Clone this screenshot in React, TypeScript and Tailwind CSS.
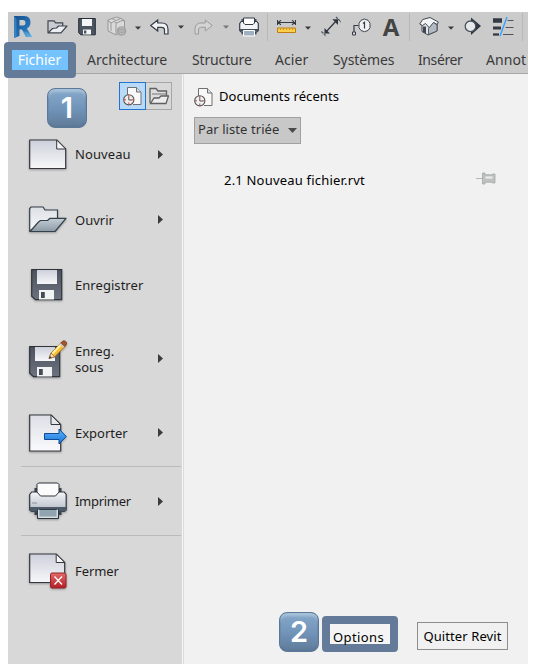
import type { ReactNode } from 'react';

type IconProps = { box: string; w: number; h: number; className?: string; children: ReactNode };

function Icon({ box, w, h, className = '', children }: IconProps) {
  return (
    <svg viewBox={box} width={w} height={h} fill="none" className={`block shrink-0 ${className}`}>
      {children}
    </svg>
  );
}

function Gradients() {
  return (
    <svg width="0" height="0" className="absolute">
      <defs>
        <linearGradient id="paper" x1="0" y1="0" x2="0" y2="1">
          <stop offset="0" stopColor="#cdd0db" />
          <stop offset="1" stopColor="#f7f7f9" />
        </linearGradient>
        <linearGradient id="sheet" x1="0" y1="0" x2="0" y2="1">
          <stop offset="0" stopColor="#dcdfe6" />
          <stop offset="1" stopColor="#fafafb" />
        </linearGradient>
        <linearGradient id="steel" x1="0" y1="0" x2="0" y2="1">
          <stop offset="0" stopColor="#c5ced6" />
          <stop offset="1" stopColor="#8c9aa6" />
        </linearGradient>
        <linearGradient id="disk" x1="0" y1="0" x2="0" y2="1">
          <stop offset="0" stopColor="#4c535e" />
          <stop offset="1" stopColor="#6c737e" />
        </linearGradient>
        <linearGradient id="blue" x1="0" y1="0" x2="0" y2="1">
          <stop offset="0" stopColor="#5bb4fa" />
          <stop offset="1" stopColor="#1973dc" />
        </linearGradient>
        <linearGradient id="red" x1="0" y1="0" x2="0" y2="1">
          <stop offset="0" stopColor="#e36b6b" />
          <stop offset="1" stopColor="#b51d25" />
        </linearGradient>
        <linearGradient id="body" x1="0" y1="0" x2="0" y2="1">
          <stop offset="0" stopColor="#f4f5f7" />
          <stop offset="1" stopColor="#b4bac5" />
        </linearGradient>
        <linearGradient id="logo" x1="0" y1="0" x2="1" y2="1">
          <stop offset="0" stopColor="#174f8c" />
          <stop offset="0.6" stopColor="#2270b5" />
          <stop offset="1" stopColor="#58b2e8" />
        </linearGradient>
      </defs>
    </svg>
  );
}

function Caret({ className, color = '#3c3c3c' }: { className: string; color?: string }) {
  return (
    <Icon box="0 0 6 4" w={6} h={4} className={className}>
      <path d="M0 .5h6L3 3.7z" fill={color} />
    </Icon>
  );
}

function Separator({ className }: { className: string }) {
  return <div className={`h-7 w-px shrink-0 bg-[#b8b8b8] ${className}`} />;
}

function QuickAccess() {
  return (
    <div className="flex h-[31px] items-center pb-[2px]">
      <Icon box="14 14 19 24" w={19} h={24} className="ml-[6px]">
        <path d="M14 15h10c5 0 6.500 3 6.500 6.500 0 3-1.500 5-3.500 6l5 8.500h-6l-4-7.500h-2.500V35L14 37zM19.500 19v5.500H23c2 0 2.500-1.300 2.500-2.700S24.700 19 22.800 19z" fill="url(#logo)" fillRule="evenodd" />
        <path d="M14 15l2.500 3v18L14 37z" fill="#4a97d2" opacity=".6" />
        <path d="M19.500 28.500h2.500l4 7.500h6l-4-4z" fill="#78c5ee" opacity=".35" />
      </Icon>
      <Icon box="47 18 21 16" w={21} h={16} className="ml-[14px]">
        <path d="M48 31.500V19.800h6l1.700 2h7v3.500" fill="#c8ccd2" stroke="#3f4650" strokeWidth="1.200" />
        <path d="M48 32l4.500-4.500 4-.5 2-2H67l-6 6.900H49z" fill="#eceef1" stroke="#3f4650" strokeWidth="1.200" strokeLinejoin="round" />
      </Icon>
      <Icon box="78 16 18 19" w={18} h={19} className="ml-[10px]">
        <path d="M78.700 17.500h16.600v16.300H80.700l-2-2z" fill="#4c5461" stroke="#262d38" />
        <path d="M82 18h10v7H82zM83 28.500h8v5h-8z" fill="#f4f5f7" />
        <path d="M84 29.500h2.300v3H84z" fill="#48515c" />
      </Icon>
      <Icon box="107 16 20 21" w={20} h={21} className="ml-[11px]">
        <path d="M108 20l4-1.500L116.500 17l4.500 1.500 3.500 2V30l-8.500 5-8-4z" fill="#dadada" stroke="#979797" />
        <path d="M108 20.500l3 2.500 3-1.500 3 1.500 3.500-2 4-.5M116 23v11M112 18.500l4 2 4.500-2M111 23v8" stroke="#979797" />
        <circle cx="121.500" cy="31" r="4.800" fill="#a4a4a4" />
        <path d="M119 31h5M119.500 28.500c2-1.500 4-.5 4.500 1M124 33c-2 1.500-4 .5-4.500-.7" stroke="#ccc" strokeWidth=".8" />
      </Icon>
      <Caret className="mt-[2px] ml-[8px]" />
      <Icon box="151 17 19 18" w={19} h={18} className="ml-[9px]">
        <path d="M151.700 24.500l7-5.500v3h4.300c4.500 0 6 3 6 6.500v4.500h-3.500v-4c0-2-1-2.700-3-2.700h-3.800v3.700z" fill="#f1f2f4" stroke="#363e4a" strokeWidth="1.200" />
      </Icon>
      <Caret className="ml-[9px]" />
      <Icon box="195 17 19 18" w={19} h={18} className="ml-[10px]">
        <path d="M213.300 24.500l-7-5.500v3H202c-4.500 0-6 3-6 6.500v4.500h3.500v-4c0-2 1-2.700 3-2.700h3.800v3.700z" fill="#d3d3d3" stroke="#9b9b9b" />
      </Icon>
      <Caret className="ml-[10px]" color="#777" />
      <Icon box="240 17 20 20" w={20} h={20} className="mt-px ml-[10px]">
        <path d="M242.500 22v-3h15v3M242.500 31v3.500h15v-3.500" fill="#454f5c" />
        <path d="M240.700 23.500l1.500-2h15.600l1.500 2v7l-1.500 1.500h-15.600l-1.500-1.500z" fill="#f3f4f6" stroke="#353d49" strokeWidth="1.200" />
        <path d="M244.500 18h11v5l-1.500 1.500h-8l-1.500-1.500z" fill="white" stroke="#353d49" />
        <path d="M241 29h18v2.500h-18z" fill="#454f5c" />
        <path d="M244.500 30.500h11v5.500h-11z" fill="#9fb0c0" stroke="white" />
      </Icon>
      <Separator className="ml-[8px]" />
      <Icon box="278 20 19 14" w={19} h={14} className="mt-px ml-[9px]">
        <path d="M279 22.500h17M282 20.300L279 22.500l3 2.200M293 20.300l3 2.200-3 2.200M278.500 20v5M296.500 20v5" stroke="#353b44" strokeWidth="1.100" />
        <path d="M278.500 28h18v4.500h-18z" fill="#fbcf4b" stroke="#bf7d12" />
        <path d="M281.500 28.500v1.500M284.500 28.500v1.500M287.500 28.500v1.500M290.500 28.500v1.500M293.500 28.500v1.500" stroke="#b98326" strokeWidth=".8" />
      </Icon>
      <Caret className="mt-[2px] ml-[9px]" />
      <Icon box="322 16 20 21" w={20} h={21} className="ml-[10px]">
        <path d="M322.500 31.500l4.500 4.500M337 17l5 5" stroke="#4f565e" strokeWidth="1.200" strokeDasharray="2.500 .6" />
        <path d="M326 33l12-13" stroke="#303742" strokeWidth="1.200" />
        <path d="M325.500 28l5.500 5.500h-5.500zM339 25l-5.700-5.700h5.700z" fill="#303742" />
      </Icon>
      <Icon box="353 17 19 18" w={19} h={18} className="ml-[11px]">
        <path d="M362 19.300l3.500-1.300 3.500 1.300 2 2.900v4.600l-2 2.700-3.500 1.200-3.500-1.200-2-2.700v-4.600z" fill="#f1f1f1" stroke="#3f4650" />
        <path d="M364 22.500l1.500-1.300v6.300M359.500 24.500H355V31" stroke="#353c45" strokeWidth="1.200" />
        <path d="M353.500 31h3v3h-3z" fill="#ddd" stroke="#353c45" />
      </Icon>
      <span className="ml-[11px] w-[18px] text-center font-['Open_Sans',sans-serif] text-[24px] leading-[30px] font-bold text-[#444]">A</span>
      <Separator className="ml-[9px]" />
      <Icon box="419 17 20 19" w={20} h={19} className="ml-[9px]">
        <path d="M422 24.500v7l6 3.500 9-4v-7.500l-5-4z" fill="#e2e5e9" stroke="#404750" />
        <path d="M419.700 24l3-4.500 7.300-2 8.300 4.500-1 2.500-3.800-2-4 5.500-4-4.500-3 2z" fill="#f4f5f6" stroke="#404750" strokeLinejoin="round" />
        <path d="M423 26.500h3v7l-3-1.500z" fill="#3f4650" />
        <path d="M428.500 28.500v6l8.500-3.500v-6l-3.500-2.500z" fill="#b4bac3" stroke="#404750" strokeWidth=".8" />
      </Icon>
      <Caret className="mt-[2px] ml-[9px]" />
      <Icon box="464 17 17 19" w={17} h={19} className="ml-[10px]">
        <path d="M471 17.500l10 8.500-10 9z" fill="#303741" />
        <circle cx="470.500" cy="26.300" r="5.300" fill="#e6e9ec" stroke="#4a525c" strokeWidth="1.300" />
      </Icon>
      <Icon box="493 17 21 20" w={21} h={20} className="ml-[12px]">
        <path d="M493 20.500h9" stroke="#333a44" strokeWidth="4.500" />
        <path d="M493 28h8" stroke="#333a44" strokeWidth="3" />
        <path d="M493 34.500h6" stroke="#333a44" strokeWidth="2.300" />
        <path d="M507.500 20.500h6M505.500 27.500h8M503 34.500h10.500" stroke="#555" />
        <path d="M500 36l7-19" stroke="#38a0ff" strokeWidth="1.400" />
      </Icon>
      <Separator className="ml-[8px]" />
    </div>
  );
}

function RecentIcon({ red = false }: { red?: boolean }) {
  return (
    <Icon box="0 0 19 19" w={19} h={19}>
      <path d="M4.500 9V.5h9l4.500 4.500v12.500H10" fill="#f8f8f8" stroke="#707070" />
      <path d="M13.500.5V5H18" fill="#ddd" stroke="#707070" />
      <circle cx="5.800" cy="12.800" r="5.100" fill={red ? '#eeeeee' : '#f1f1f1'} stroke="#555" strokeWidth="1.100" />
      <path d="M5.800 9.500V13H9" stroke="#555" />
      <path d="M5.800 8v1.800M5.800 15.500v2M1 12.800h2M8.700 12.800h2" stroke={red ? '#e03c2c' : '#a24d43'} />
    </Icon>
  );
}

function FloppyShape() {
  return (
    <>
      <path d="M.7.700h30v30H4.500l-3.800-3.500z" fill="url(#disk)" stroke="#30343b" strokeWidth="1.200" />
      <path d="M6 1h20v14H6z" fill="url(#paper)" />
      <path d="M8 21h15v9.500H8z" fill="#f2f3f5" />
      <path d="M10 23h3.800v6H10z" fill="#464c56" />
    </>
  );
}

const shadow = 'drop-shadow-[0_1px_1px_rgba(0,0,0,0.3)]';

const NewIcon = () => (
  <Icon box="0 0 38 31" w={38} h={31} className={shadow}>
    <path d="M.7 1h27l9 9v19.500H.7z" fill="url(#paper)" stroke="#34373c" strokeWidth="1.200" strokeLinejoin="round" />
    <path d="M27.700 1v9h9z" fill="#f6f6f6" stroke="#34373c" />
  </Icon>
);

const OpenIcon = () => (
  <Icon box="0 0 38 27" w={38} h={27} className={shadow}>
    <path d="M.7 25V2.500L2 1H14l2 3h12.500v10l-20 6z" fill="url(#sheet)" stroke="#34404a" strokeWidth="1.200" />
    <path d="M1 25.500L9.500 16l2-1.500h7l2.500-2.200h16L26 25.500z" fill="url(#steel)" stroke="#34404a" strokeWidth="1.200" strokeLinejoin="round" />
  </Icon>
);

const SaveIcon = () => (
  <Icon box="0 0 32 32" w={32} h={32} className={`ml-[2px] ${shadow}`}>
    <FloppyShape />
  </Icon>
);

const SaveAsIcon = () => (
  <Icon box="0 -6 39 38" w={39} h={38} className={shadow}>
    <FloppyShape />
    <path d="M20 12.500l2-5.500L33-4l4 3.500-11.500 11.500z" fill="#f9bd32" stroke="#9b611c" strokeWidth=".8" />
    <path d="M23.500 7.500l10-10.500" stroke="#fff2a0" strokeWidth="2" />
    <path d="M31.500-2.700L34-5c2-.7 4 1 3.700 3l-2 2.300z" fill="#a35432" stroke="#6c321a" strokeWidth=".7" />
    <path d="M30.800-2.200l4 3.400" stroke="#ccc" strokeWidth="1.600" />
    <path d="M20 12.500l2-5.500 3.800 3.800z" fill="#f6dbb3" stroke="#755025" strokeWidth=".6" />
    <path d="M20 12.500l1-2.500 1.500 1.500z" fill="#333" />
  </Icon>
);

const ExportIcon = () => (
  <Icon box="0 0 38 38" w={38} h={38} className={shadow}>
    <path d="M.7 1h21.500L31.700 10.500V37H.7z" fill="url(#sheet)" stroke="#34373c" strokeWidth="1.200" />
    <path d="M22 1v9.500h9.500z" fill="#e4e6e9" stroke="#34373c" />
    <path d="M15.500 19.500H30V15l7.300 7.500-7.300 7.500v-4.500H15.500z" fill="url(#blue)" stroke="#104b94" />
  </Icon>
);

const PrintIcon = () => (
  <Icon box="0 0 38 38" w={38} h={38} className={shadow}>
    <path d="M5.500 11V6h27v5M5.500 27v6h27v-6" fill="#39434e" />
    <path d="M.7 12.500l2-2.500h32.500l2 2.500V28l-2 1.500H2.700L.7 28z" fill="url(#body)" stroke="#303740" strokeWidth="1.200" />
    <path d="M1 25h36v3.500l-1.500 1h-33L1 28.500z" fill="#4c5968" />
    <path d="M8 2.500L9.500 1h19L30 2.500V10l-3.500 4h-15L8 10z" fill="#fbfbfc" stroke="#303740" />
    <path d="M8.500 27.500h21v9h-21z" fill="#91a4b2" stroke="#303740" />
    <path d="M9.800 27.500v7.700h18.400v-7.700" stroke="#f6f6f6" />
    <path d="M3 21h5" stroke="#8d939a" />
  </Icon>
);

const CloseIcon = () => (
  <Icon box="0 0 38 36" w={38} h={36} className={shadow}>
    <path d="M.7 1h26.500l8.500 8.500v20H.7z" fill="url(#paper)" stroke="#34373c" strokeWidth="1.200" />
    <path d="M27.200 1v8.500h8.500z" fill="#f6f6f6" stroke="#34373c" />
    <rect x="21.500" y="20" width="15.500" height="15" rx="1.500" fill="url(#red)" stroke="#8e2228" />
    <path d="M25.500 23.500l7.500 8M33 23.500l-7.500 8" stroke="white" strokeWidth="1.300" />
  </Icon>
);

type ItemProps = { icon: ReactNode; label: ReactNode; height: string; arrow?: boolean; tracking?: string };

function MenuItem({ icon, label, height, arrow = false, tracking = '' }: ItemProps) {
  return (
    <div className={`flex items-center pr-[19px] pl-[21px] ${height}`}>
      <div className="w-[46px] shrink-0">{icon}</div>
      <span className={`flex-1 text-[13px] leading-4 text-[#1e1e1e] ${tracking}`}>{label}</span>
      {arrow && (
        <Icon box="0 0 5 9" w={5} h={9}>
          <path d="M0 0l5 4.500L0 9z" fill="#3b3b3b" />
        </Icon>
      )}
    </div>
  );
}

function Rule() {
  return <div className="mr-px ml-[13px] h-px bg-[#bababa]" />;
}

function Sidebar() {
  return (
    <aside className="w-[174px] shrink-0 bg-[#d8d8d8]">
      <div className="flex h-[47px] justify-end pt-2 pr-[10px]">
        <div className="z-10 flex h-7 w-[27px] items-center justify-center border border-[#2274ce] bg-[#b9d9f8]">
          <RecentIcon red />
        </div>
        <div className="-ml-px flex h-7 w-[27px] items-center justify-center border border-[#a6a6a6]">
          <Icon box="0 0 20 18" w={20} h={18}>
            <path d="M1 16V1.500h6l2 2.500h8.500v5" fill="#dedede" stroke="#606060" strokeWidth="1.300" />
            <path d="M3 7h14" stroke="#777" />
            <path d="M1.500 16.500L5 11h5l2-2h7.500L17 16.500z" fill="#ececec" stroke="#606060" strokeWidth="1.300" />
          </Icon>
        </div>
      </div>
      <MenuItem icon={<NewIcon />} label="Nouveau" height="h-[66px]" tracking="tracking-[0.1px]" arrow />
      <MenuItem icon={<OpenIcon />} label="Ouvrir" height="h-[65px]" arrow />
      <MenuItem icon={<SaveIcon />} label="Enregistrer" height="h-[66px]" tracking="tracking-[0.05px]" />
      <MenuItem icon={<SaveAsIcon />} label={<>Enreg.<br />sous</>} height="h-[81px]" arrow />
      <MenuItem icon={<ExportIcon />} label="Exporter" height="h-[67px]" arrow />
      <Rule />
      <MenuItem icon={<PrintIcon />} label="Imprimer" height="h-[68px]" tracking="tracking-[-0.3px]" arrow />
      <Rule />
      <MenuItem icon={<CloseIcon />} label="Fermer" height="h-[70px]" tracking="tracking-[-0.1px]" />
    </aside>
  );
}

function Badge({ children, className }: { children: ReactNode; className: string }) {
  return (
    <div className={`absolute flex size-10 items-center justify-center rounded-[8px] border border-[#5b7898] bg-linear-to-b from-[#86a8c9] via-[#7295ba] to-[#5f7a98] pb-[2px] font-['Inter','Liberation_Sans',sans-serif] text-[29px] leading-none font-semibold text-white shadow-[inset_0_4px_3px_-1px_#a9c3da,inset_0_0_1px_1px_#58759499] ${className}`}>
      {children}
    </div>
  );
}

function RecentPanel() {
  return (
    <main className="flex flex-1 flex-col bg-[#f1f1f1] text-[13px] text-black">
      <div className="mt-[14px] ml-[10px] flex h-[19px] items-center">
        <RecentIcon />
        <h1 className="-mt-[3px] ml-[6px] text-[13px] leading-[18px] tracking-[0.1px]">Documents récents</h1>
      </div>
      <button className="mt-[10px] ml-[10px] flex h-[27px] w-[107px] items-center border border-[#a0a0a0] bg-[#c8c8c8] pl-[3px] text-[13px] text-[#333]">
        <span className="-mt-px w-[90px] text-left tracking-[0.07px]">Par liste triée</span>
        <Icon box="0 0 9 5" w={9} h={5}><path d="M0 0h9L4.500 5z" fill="#4a4a4a" /></Icon>
      </button>
      <div className="mt-[27px] ml-[40px] flex h-5 items-center pr-[32px]">
        <span className="flex-1 tracking-[0.2px]">2.1 Nouveau fichier.rvt</span>
        <Icon box="0 0 20 13" w={20} h={13} className="-mt-[5px]">
          <path d="M0 6.500h7" stroke="#b5b5b5" />
          <path d="M6.500 1H9v1.800h7.500V2H19v9h-2.500v-.8H9V12H6.500z" fill="#bfc1c1" stroke="#a5a8a8" strokeWidth=".8" />
          <path d="M9.500 5.500h7" stroke="#eee" strokeWidth="2" />
        </Icon>
      </div>
      <footer className="mt-auto mr-[20px] mb-[12px] flex h-9 items-center justify-end">
        <button className="flex h-9 w-[76px] items-center rounded-[4px] border-8 border-[#637b98] bg-[#f4f4f4] pt-[5px] pl-[3px] text-[13px] leading-5 tracking-[0.4px] whitespace-nowrap">Options</button>
        <button className="mt-[4px] ml-[19px] h-7 w-[91px] border border-[#8e8e8e] text-[13px] leading-[27px] tracking-[0.1px] whitespace-nowrap">Quitter Revit</button>
      </footer>
    </main>
  );
}

export default function App() {
  return (
    <div className="relative h-[672px] w-[536px] overflow-hidden bg-white px-2 pt-3 pb-2 font-['Noto_Sans',sans-serif]">
      <Gradients />
      <div className="flex h-[652px] flex-col bg-[#cbcbcb]">
        <QuickAccess />
        <nav className="flex h-[31px] shrink-0 overflow-hidden border-b border-[#a6a6a6] text-[14px] leading-[34px] whitespace-nowrap text-[#3a3a3a]">
          <span className="w-[79px] shrink-0" />
          <span className="w-[105px] shrink-0">Architecture</span>
          <span className="w-[83px] shrink-0 tracking-[-0.15px]">Structure</span>
          <span className="w-[58px] shrink-0 tracking-[0.1px]">Acier</span>
          <span className="w-[85px] shrink-0 tracking-[-0.1px]">Systèmes</span>
          <span className="w-[68px] shrink-0 tracking-[-0.4px]">Insérer</span>
          <span className="shrink-0 tracking-[0.1px]">Annot</span>
        </nav>
        <div className="flex flex-1">
          <Sidebar />
          <div className="w-[2px] border-r border-[#dcdcdc] bg-[#f4f4f4]" />
          <RecentPanel />
        </div>
      </div>
      <button className="absolute top-[42px] left-1 h-9 w-[72px] rounded-[4px] border-8 border-[#637b98] bg-[#74c3ff] pr-px text-[14px] leading-5 text-white">Fichier</button>
      <Badge className="top-[88px] left-[47px]">1</Badge>
      <Badge className="top-[612px] left-[279px]">2</Badge>
    </div>
  );
}
